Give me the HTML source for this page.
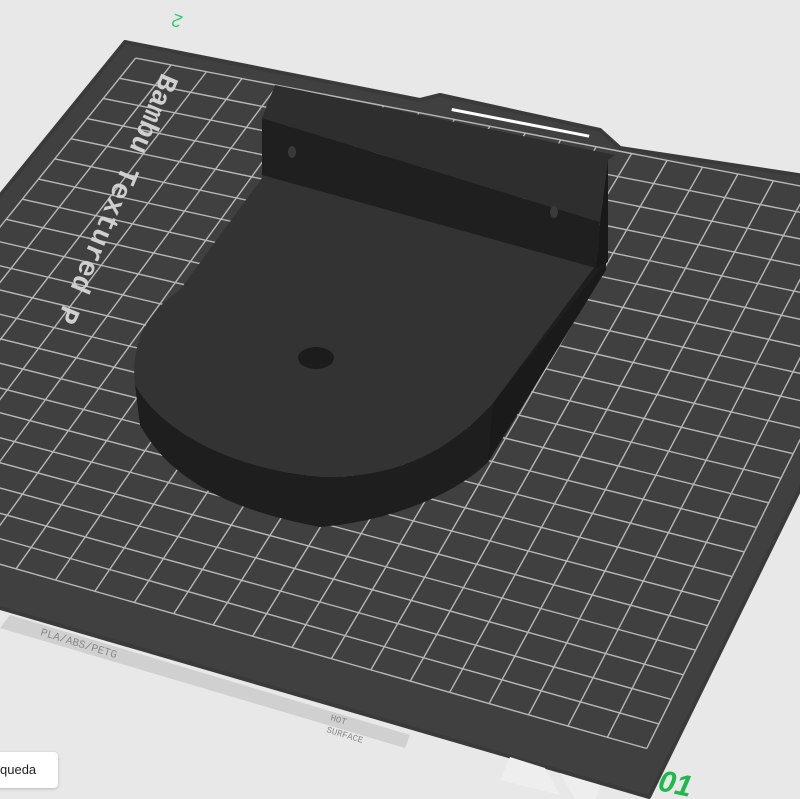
<!DOCTYPE html>
<html><head><meta charset="utf-8"><style>
html,body{margin:0;padding:0;width:800px;height:799px;overflow:hidden;background:#e8e8e8;font-family:"Liberation Sans",sans-serif}
svg{position:absolute;left:0;top:0}
.btn{position:absolute;left:-10px;top:752px;width:58px;height:36px;background:#fff;border-radius:4px;box-shadow:0 1px 3px rgba(0,0,0,.2);font-size:13px;line-height:36px;padding-left:10px;color:#222}
</style></head><body>
<svg id="s" width="800" height="799" viewBox="0 0 800 799">
<polygon points="125,42 420,100 440,95 600,130 620,148 943,197 649,797 -271,529" fill="#404040" stroke="#3a3a3a" stroke-width="4" stroke-linejoin="round"/>
<rect x="452" y="108" width="140" height="3" fill="#fff" transform="rotate(11 452 108)"/>
<g id="grid" stroke="#c4c4c4" stroke-width="1.4" opacity="0.9"></g>
<polygon points="10,615 410,735 405,748 0,628" fill="#d0d0d0"/>
<text x="40" y="635" font-size="11" fill="#888" transform="rotate(17 40 635)" font-family="Liberation Mono,monospace">PLA/ABS/PETG</text>
<text x="330" y="720" font-size="9" fill="#888" transform="rotate(17 330 720)" font-family="Liberation Mono,monospace">HOT</text>
<text x="326" y="732" font-size="9" fill="#888" transform="rotate(17 326 732)" font-family="Liberation Mono,monospace">SURFACE</text>
<polygon points="510,757 545,768 560,795 500,780" fill="#eee"/>
<polygon points="560,773 600,785 596,799 575,799" fill="#eee"/>
<text x="162" y="72" font-size="28" font-weight="bold" fill="#cfcfcf" transform="rotate(113 162 72)" font-family="Liberation Mono,monospace">Bambu Textured P</text>
<text x="168" y="26" font-size="18" fill="#2ecc71" transform="rotate(200 175 20)">2</text>
<text x="657" y="790" font-size="30" font-weight="bold" font-style="italic" fill="#1fb84a" transform="rotate(12 657 790)">01</text>
<path d="M135,385 L140,425 C170,480 230,510 320,527 C400,520 460,490 488,462 L606,262 L595,262 L493,403 C450,450 400,477 324,477 C230,470 165,430 135,385 Z" fill="#1e1e1e"/>
<path d="M493,403 L606,262 L606,270 L488,462 Z" fill="#1a1a1a"/>
<path d="M262,175 L596,265 L493,403 C450,450 400,477 324,477 C230,470 160,430 135,385 C130,340 150,310 180,290 L262,178 Z" fill="#333333"/>
<ellipse cx="316" cy="358" rx="18" ry="11" fill="#1c1c1c"/>
<polygon points="262,118 275,85 615,155 608,160 600,222" fill="#2e2e2e"/>
<polygon points="262,118 600,222 596,268 262,175" fill="#1f1f1f"/>
<polygon points="600,222 608,160 608,262 596,268" fill="#191919"/>
<ellipse cx="292" cy="152" rx="4" ry="6" fill="#3a3a3a"/>
<ellipse cx="554" cy="212" rx="4" ry="6" fill="#3a3a3a"/>
</svg>
<div class="btn">queda</div>
<script>
var g=document.getElementById('grid'),TL=[125,42],TR=[943,197],BR=[649,797],BL=[-271,529];
function P(u,v){var a=[TL[0]+(TR[0]-TL[0])*u,TL[1]+(TR[1]-TL[1])*u],b=[BL[0]+(BR[0]-BL[0])*u,BL[1]+(BR[1]-BL[1])*u];return [a[0]+(b[0]-a[0])*v,a[1]+(b[1]-a[1])*v];}
var h='',n=22,m=0.025,vb=0.93;
for(var i=0;i<=n;i++){var t=m+(1-2*m)*i/n;var p=P(t,m),q=P(t,vb);h+='<line x1="'+p[0]+'" y1="'+p[1]+'" x2="'+q[0]+'" y2="'+q[1]+'"/>';
var s=m+(vb-m)*i/n;p=P(m,s);q=P(1-m,s);h+='<line x1="'+p[0]+'" y1="'+p[1]+'" x2="'+q[0]+'" y2="'+q[1]+'"/>';}
g.innerHTML=h;
</script>
</body></html>
